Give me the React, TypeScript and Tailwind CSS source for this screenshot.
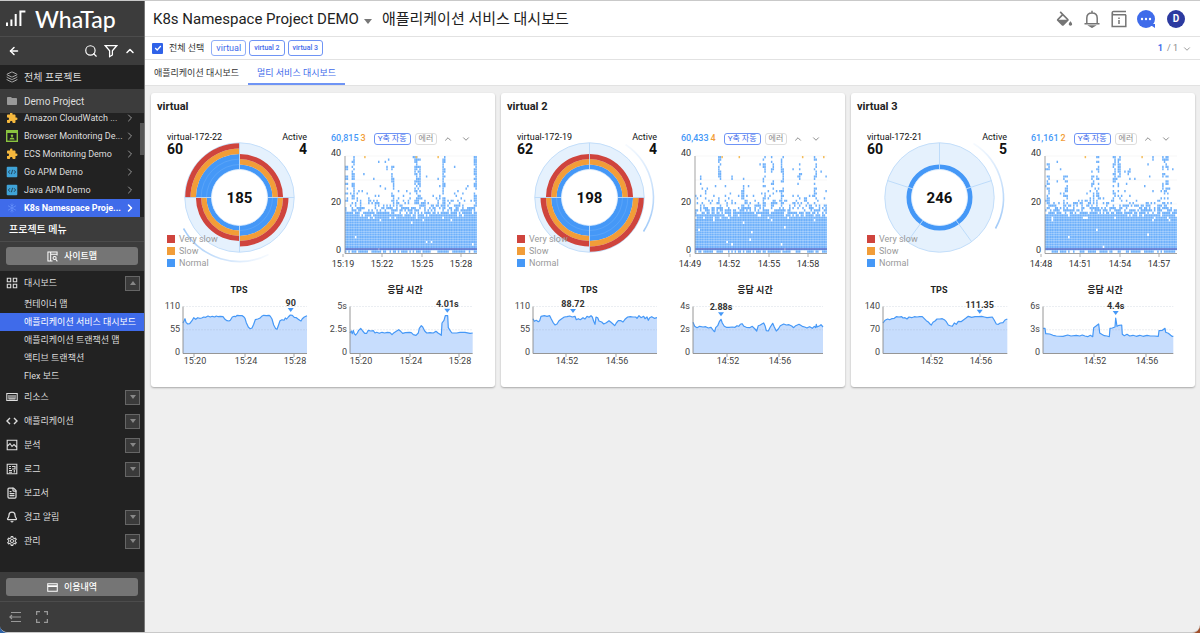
import type { ReactNode } from "react";
import {
  ArrowLeft,
  Bell,
  ChevronDown,
  ChevronRight,
  ChevronUp,
  FileText,
  Layers,
  Search,
} from "lucide-react";
import { MdExtension, MdFolder, MdOutlineSettings } from "react-icons/md";

type Point = [number, number];

const BLUE = "#4598f7";
const ORANGE = "#f29d38";
const RED = "#cf443d";

/* ------------------------------------------------------------------ */
/* Data                                                                */
/* ------------------------------------------------------------------ */

interface LineSeries {
  title: string;
  left: number;
  span: number;
  ticks: [string, string, string];
  times: { label: string; x: number }[];
  peak: { label: string; x: number; y: number };
  points: Point[];
}

interface Slice {
  from: number;
  to: number;
  /* outer radii of the normal, slow and very slow bands */
  radii: number[];
}

interface Service {
  name: string;
  host: string;
  transactions: number;
  active: number;
  total: number;
  slices: Slice[];
  sweep: { x1: number; y1: number; x2: number; y2: number };
  hits: string;
  errors: string;
  hitTimes: { label: string; x: number }[];
  spikes: { at: number; width: number; low: number; high: number; density: number }[];
  warnings: number[];
  seed: number;
  tps: LineSeries;
  response: LineSeries;
}

const SERVICES: Service[] = [
  {
    name: "virtual",
    host: "virtual-172-22",
    transactions: 60,
    active: 4,
    total: 185,
    slices: [
      { from: -90, to: 0, radii: [33, 38.4, 43.6] },
      { from: 0, to: 90, radii: [38.4, 43.6, 49] },
      { from: 90, to: 180, radii: [33, 38.4, 43.6] },
      { from: 180, to: 270, radii: [43.6, 49, 54.3] },
    ],
    sweep: { x1: -56, y1: 31, x2: 29, y2: 57 },
    hits: "60,815",
    errors: "3",
    hitTimes: [
      { label: "15:19", x: 12 },
      { label: "15:22", x: 51 },
      { label: "15:25", x: 91 },
      { label: "15:28", x: 130 },
    ],
    spikes: [
      { at: 0.01, width: 1, low: 20, high: 36, density: 0.45 },
      { at: 0.055, width: 1, low: 20, high: 40, density: 0.7 },
      { at: 0.36, width: 1, low: 18, high: 36, density: 0.5 },
      { at: 0.54, width: 2, low: 18, high: 40, density: 0.6 },
      { at: 0.745, width: 1, low: 18, high: 40, density: 0.65 },
      { at: 0.985, width: 1, low: 18, high: 40, density: 0.75 },
    ],
    warnings: [0.145, 0.535, 0.7],
    seed: 11,
    tps: {
      title: "TPS",
      left: 32,
      span: 372,
      ticks: ["110", "55", "0"],
      times: [
        { label: "15:20", x: 43 },
        { label: "15:24", x: 94 },
        { label: "15:28", x: 143 },
      ],
      peak: { label: "90", x: 323, y: 114 },
      points: [[0,90],[3,96],[6,103],[9,92],[14,87],[20,88],[27,97],[32,106],[38,101],[44,106],[50,104],[56,105],[62,108],[68,107],[75,111],[82,108],[88,110],[95,108],[100,111],[106,109],[112,110],[120,109],[126,101],[132,97],[138,96],[142,98],[148,108],[154,110],[158,109],[162,113],[170,112],[178,112],[183,108],[186,104],[190,91],[196,78],[201,73],[207,75],[212,86],[217,100],[224,102],[230,104],[236,110],[242,113],[250,112],[258,113],[262,110],[267,102],[272,84],[278,73],[282,71],[286,82],[291,97],[297,100],[303,98],[307,105],[311,102],[316,108],[322,114],[328,113],[334,107],[340,106],[346,101],[350,98],[354,96],[358,103],[364,108],[372,112]],
    },
    response: {
      title: "응답 시간",
      left: 27,
      span: 368,
      ticks: ["5s", "2.5s", "0"],
      times: [
        { label: "15:20", x: 37 },
        { label: "15:24", x: 87 },
        { label: "15:28", x: 136 },
      ],
      peak: { label: "4.01s", x: 292, y: 112 },
      points: [[0,60],[4,66],[7,58],[10,68],[13,58],[17,54],[22,60],[26,68],[32,74],[38,66],[44,59],[50,59],[55,68],[62,66],[70,67],[75,60],[80,62],[88,59],[96,62],[104,60],[112,62],[120,61],[126,55],[132,61],[140,66],[146,70],[152,65],[158,59],[166,61],[178,62],[184,61],[190,55],[198,53],[205,60],[208,74],[214,82],[218,78],[224,66],[230,60],[240,61],[250,60],[258,65],[264,60],[270,56],[274,53],[276,90],[282,98],[286,112],[293,112],[295,76],[302,65],[306,60],[320,60],[330,62],[345,62],[360,59],[368,60]],
    },
  },
  {
    name: "virtual 2",
    host: "virtual-172-19",
    transactions: 62,
    active: 4,
    total: 198,
    slices: [
      { from: -90, to: 0, radii: [33, 38.4, 43.6] },
      { from: 0, to: 90, radii: [43.6, 49, 54.3] },
      { from: 90, to: 180, radii: [38.4, 43.6, 49] },
      { from: 180, to: 270, radii: [33, 38.4, 43.6] },
    ],
    sweep: { x1: 54, y1: 34, x2: 36, y2: -53 },
    hits: "60,433",
    errors: "4",
    hitTimes: [
      { label: "14:49", x: 9 },
      { label: "14:52", x: 48 },
      { label: "14:55", x: 88 },
      { label: "14:58", x: 127 },
    ],
    spikes: [
      { at: 0.04, width: 1, low: 18, high: 33, density: 0.45 },
      { at: 0.18, width: 1, low: 30, high: 40, density: 0.8 },
      { at: 0.36, width: 1, low: 18, high: 31, density: 0.4 },
      { at: 0.52, width: 1, low: 18, high: 40, density: 0.5 },
      { at: 0.585, width: 1, low: 18, high: 40, density: 0.5 },
      { at: 0.66, width: 1, low: 18, high: 40, density: 0.5 },
      { at: 0.785, width: 1, low: 18, high: 35, density: 0.45 },
      { at: 0.91, width: 1, low: 18, high: 40, density: 0.6 },
    ],
    warnings: [0.2, 0.33, 0.81, 0.97],
    seed: 29,
    tps: {
      title: "TPS",
      left: 32,
      span: 372,
      ticks: ["110", "55", "0"],
      times: [
        { label: "14:52", x: 65 },
        { label: "14:56", x: 115 },
      ],
      peak: { label: "88.72", x: 120, y: 111 },
      points: [[0,103],[4,95],[10,98],[16,94],[20,97],[24,110],[34,112],[42,110],[50,112],[55,102],[60,92],[66,84],[72,87],[78,97],[86,103],[94,108],[102,109],[110,111],[118,108],[126,110],[130,100],[136,103],[142,100],[150,106],[156,102],[162,110],[168,107],[174,112],[178,108],[182,95],[186,86],[189,108],[194,106],[198,96],[206,93],[212,87],[220,91],[228,97],[234,92],[240,87],[245,82],[250,90],[256,97],[264,97],[270,93],[276,101],[284,108],[292,109],[300,108],[308,108],[312,104],[318,112],[324,106],[332,110],[336,103],[342,108],[346,98],[350,106],[356,109],[364,104],[372,106]],
    },
    response: {
      title: "응답 시간",
      left: 20,
      span: 390,
      ticks: ["4s", "2s", "0"],
      times: [
        { label: "14:52", x: 54 },
        { label: "14:56", x: 106 },
      ],
      peak: { label: "2.88s", x: 84, y: 101 },
      points: [[0,92],[5,80],[12,76],[20,80],[30,78],[38,79],[46,75],[54,77],[58,72],[62,66],[65,64],[68,76],[74,82],[79,94],[84,101],[88,90],[94,80],[100,77],[108,77],[118,78],[126,77],[132,82],[137,80],[142,86],[147,88],[153,80],[160,77],[170,76],[178,80],[186,72],[191,66],[196,82],[202,84],[208,88],[212,90],[216,82],[220,67],[226,66],[232,78],[239,89],[244,78],[250,66],[256,72],[262,82],[272,87],[280,84],[288,85],[296,81],[302,76],[308,82],[318,86],[328,80],[335,78],[342,75],[346,77],[350,79],[358,74],[364,80],[368,76],[370,86],[372,78],[380,82],[384,85],[390,78]],
    },
  },
  {
    name: "virtual 3",
    host: "virtual-172-21",
    transactions: 60,
    active: 5,
    total: 246,
    slices: [0, 1, 2, 3, 4].map((i) => ({ from: -90 + i * 72, to: -18 + i * 72, radii: [33] })),
    sweep: { x1: 56, y1: 31, x2: 34, y2: -54 },
    hits: "61,161",
    errors: "2",
    hitTimes: [
      { label: "14:48", x: 10 },
      { label: "14:51", x: 49 },
      { label: "14:54", x: 89 },
      { label: "14:57", x: 128 },
    ],
    spikes: [
      { at: 0.015, width: 1, low: 18, high: 37, density: 0.45 },
      { at: 0.15, width: 1, low: 18, high: 32, density: 0.4 },
      { at: 0.36, width: 1, low: 18, high: 34, density: 0.5 },
      { at: 0.39, width: 1, low: 18, high: 40, density: 0.55 },
      { at: 0.515, width: 1, low: 18, high: 40, density: 0.6 },
      { at: 0.555, width: 1, low: 18, high: 40, density: 0.5 },
      { at: 0.63, width: 1, low: 18, high: 34, density: 0.4 },
      { at: 0.91, width: 2, low: 18, high: 40, density: 0.5 },
    ],
    warnings: [0.3, 0.73],
    seed: 47,
    tps: {
      title: "TPS",
      left: 32,
      span: 373,
      ticks: ["140", "70", "0"],
      times: [
        { label: "14:52", x: 80 },
        { label: "14:56", x: 129 },
      ],
      peak: { label: "111.35", x: 290, y: 109 },
      points: [[0,90],[6,98],[14,102],[20,100],[26,103],[34,104],[40,109],[48,108],[56,109],[60,105],[66,106],[72,102],[78,108],[86,106],[94,109],[102,108],[110,109],[118,109],[124,103],[130,97],[136,93],[140,88],[145,84],[150,92],[156,96],[162,102],[170,102],[178,103],[184,100],[190,94],[196,84],[202,82],[208,80],[214,90],[220,86],[226,95],[234,94],[242,100],[248,104],[256,110],[266,107],[276,109],[286,109],[296,110],[304,108],[312,106],[320,107],[328,108],[334,98],[340,87],[346,86],[352,90],[360,91],[366,99],[373,102]],
    },
    response: {
      title: "응답 시간",
      left: 20,
      span: 391,
      ticks: ["6s", "3s", "0"],
      times: [
        { label: "14:52", x: 71 },
        { label: "14:56", x: 123 },
      ],
      peak: { label: "4.4s", x: 218, y: 105 },
      points: [[0,74],[6,74],[8,58],[20,57],[30,53],[40,51],[60,50],[74,54],[84,51],[100,53],[110,51],[118,54],[126,51],[134,49],[142,53],[149,49],[152,76],[158,80],[167,87],[170,60],[176,56],[184,52],[192,51],[199,49],[201,74],[208,75],[216,78],[218,105],[222,80],[228,83],[236,84],[238,56],[244,52],[252,56],[260,51],[270,53],[280,50],[290,53],[300,50],[312,53],[322,51],[334,51],[346,50],[348,67],[358,68],[366,74],[368,62],[376,59],[383,53],[387,50],[391,50]],
    },
  },
];

const PROJECTS = [
  { name: "Browser Monitoring De...", icon: "browser" },
  { name: "ECS Monitoring Demo", icon: "puzzle" },
  { name: "Go APM Demo", icon: "code" },
  { name: "Java APM Demo", icon: "code" },
];

const DASHBOARD_ITEMS = [
  "컨테이너 맵",
  "애플리케이션 서비스 대시보드",
  "애플리케이션 트랜잭션 맵",
  "액티브 트랜잭션",
  "Flex 보드",
];

/* ------------------------------------------------------------------ */
/* Charts                                                              */
/* ------------------------------------------------------------------ */

function polar(radius: number, degrees: number): Point {
  const a = (degrees * Math.PI) / 180;
  return [Math.cos(a) * radius, Math.sin(a) * radius];
}

function band(inner: number, outer: number, from: number, to: number) {
  const [ax, ay] = polar(outer, from);
  const [bx, by] = polar(outer, to);
  const [cx, cy] = polar(inner, to);
  const [dx, dy] = polar(inner, from);
  return `M${ax} ${ay}A${outer} ${outer} 0 0 1 ${bx} ${by}L${cx} ${cy}A${inner} ${inner} 0 0 0 ${dx} ${dy}Z`;
}

function Donut({ service }: { service: Service }) {
  const { sweep } = service;
  const id = `sweep-${service.seed}`;
  return (
    <svg viewBox="0 0 172 142" className="h-[142px] w-full" role="img" aria-label={`${service.name} active transactions`}>
      <defs>
        <linearGradient id={id} gradientUnits="userSpaceOnUse" x1={sweep.x1} y1={sweep.y1} x2={sweep.x2} y2={sweep.y2}>
          <stop offset="0" stopColor="#a3cbf8" />
          <stop offset="1" stopColor="#a3cbf8" stopOpacity="0.1" />
        </linearGradient>
      </defs>
      <g transform="translate(88.5 72.5)">
        <circle r="54.7" fill="#e5f1fd" stroke="#c3defa" />
        {service.slices.map((slice) =>
          slice.radii.map((radius, i) => (
            <path
              key={`${slice.from}-${i}`}
              d={band(i === 0 ? 28 : slice.radii[i - 1], radius, slice.from, slice.to)}
              fill={[BLUE, ORANGE, RED][i]}
            />
          )),
        )}
        {service.slices.map((slice) =>
          [33, 38.4].filter((r) => r < slice.radii[0]).map((r) => (
            <circle
              key={`${slice.from}-${r}`}
              r={r}
              fill="none"
              stroke="#66abf8"
              strokeWidth="0.6"
              pathLength="360"
              strokeDasharray="90 270"
              transform={`rotate(${slice.from})`}
            />
          )),
        )}
        {service.slices.map((slice) => {
          const [x, y] = polar(54.7, slice.from);
          const [ix, iy] = polar(28, slice.from);
          return <path key={slice.from} d={`M${ix} ${iy}L${x} ${y}`} stroke="#b9d9f9" strokeWidth="0.9" />;
        })}
        <circle r="28" fill="#fff" stroke="#d5e8fc" strokeWidth="0.8" />
        <path
          d={`M${sweep.x1} ${sweep.y1}A64 64 0 0 0 ${sweep.x2} ${sweep.y2}`}
          fill="none"
          stroke={`url(#${id})`}
          strokeWidth="1.6"
        />
        <text textAnchor="middle" y="5" className="text-[15px] font-bold" fill="#111">
          {service.total}
        </text>
      </g>
    </svg>
  );
}

function random(seed: number) {
  let a = seed;
  return () => {
    a = (a + 0x6d2b79f5) | 0;
    let t = Math.imul(a ^ (a >>> 15), 1 | a);
    t = (t + Math.imul(t ^ (t >>> 7), 61 | t)) ^ t;
    return ((t ^ (t >>> 14)) >>> 0) / 4294967296;
  };
}

const COLUMNS = 80;
const ROWS = 40;
/* chance of a hit for the rows from 13 upwards */
const FALLOFF = [0.97, 0.94, 0.86, 0.72, 0.56, 0.44, 0.34, 0.26, 0.2, 0.15, 0.1, 0.07, 0.05, 0.04, 0.03];

function hitCells(service: Service) {
  const next = random(service.seed);
  const cw = 132 / COLUMNS;
  const rh = 97 / ROWS;
  let d = "";
  for (let column = 0; column < COLUMNS; column++) {
    for (let row = 0; row < ROWS; row++) {
      let p = row === 0 ? 0.6 : row < 13 ? 0.993 : (FALLOFF[row - 13] ?? 0.015);
      for (const spike of service.spikes) {
        const distance = Math.abs(column - spike.at * COLUMNS);
        if (distance <= spike.width && row >= spike.low && row < spike.high) p = Math.max(p, spike.density);
      }
      if (next() < p) {
        d += `M${(column * cw).toFixed(2)} ${(97 - (row + 1) * rh).toFixed(2)}h1.5v2.2h-1.5z`;
      }
    }
  }
  return d;
}

function HitMap({ service }: { service: Service }) {
  return (
    <svg viewBox="0 0 172 126" className="h-[126px] w-full" role="img" aria-label={`${service.name} hit map`}>
      <g transform="translate(22 11)">
        {[0, 24, 48, 72].map((y) => (
          <path key={y} d={`M0 ${y}H132`} stroke="#f1f1f1" strokeWidth="0.6" />
        ))}
        <path d={hitCells(service)} fill="#6fb1fb" />
        {service.warnings.map((at) => (
          <rect key={at} x={at * 132} width="1.5" height="2.2" fill="#f4bd5c" />
        ))}
        <path d="M0 93H132" stroke="#5a62bd" strokeWidth="1.5" strokeOpacity="0.85" />
        <path d="M0 0V97.5H132" fill="none" stroke="#999" strokeWidth="0.9" />
      </g>
      <g fill="#333" className="text-[9px]">
        <text x="18" y="11" textAnchor="end">40</text>
        <text x="18" y="60" textAnchor="end">20</text>
        <text x="18" y="108" textAnchor="end">0</text>
        {service.hitTimes.map((time) => (
          <g key={time.label}>
            <path d={`M${time.x + 8} 109v3`} stroke="#999" strokeWidth="0.8" />
            <text x={time.x + 8} y="122" textAnchor="middle">{time.label}</text>
          </g>
        ))}
      </g>
    </svg>
  );
}

function LineChart({ series, titleClass }: { series: LineSeries; titleClass: string }) {
  const base = 56;
  const top = 9.5;
  const place = ([x, y]: Point): Point => [series.left + x / 3, base - y / 3];
  const line = series.points.map((p) => place(p).map((n) => n.toFixed(1)).join(" ")).join("L");
  const right = series.left + series.span / 3;
  const [px, py] = place([series.peak.x, series.peak.y]);
  return (
    <section className="text-center text-[9px]">
      <h3 className={titleClass}>{series.title}</h3>
      <svg viewBox="0 0 172 74" className="h-[74px] w-full" role="img" aria-label={series.title}>
        <path d={`M${series.left} ${base}L${line}L${right} ${base}Z`} fill="#c7ddfd" />
        {[top, (top + base) / 2].map((y) => (
          <path key={y} d={`M${series.left} ${y}H${right}`} stroke="#8b9bb5" strokeOpacity="0.25" strokeWidth="0.7" strokeDasharray="2 1" />
        ))}
        <path d={`M${line}`} fill="none" stroke={BLUE} strokeWidth="1.2" strokeLinejoin="round" />
        <path d={`M${series.left} ${top}V${base + 0.5}H${right}`} fill="none" stroke="#8a8a8a" strokeWidth="0.9" />
        <path d={`M${px - 3} ${py - 7}h6l-3 4z`} fill={BLUE} />
        <text x={px} y={py - 9} textAnchor="middle" className="font-bold" fill="#333">
          {series.peak.label}
        </text>
        <g fill="#444">
          {series.ticks.map((tick, i) => (
            <text key={tick} x={series.left - 3} y={[12, 35, 58][i]} textAnchor="end">{tick}</text>
          ))}
          {series.times.map((time) => (
            <g key={time.label}>
              <path d={`M${time.x} ${base + 1}v3`} stroke="#8a8a8a" strokeWidth="0.8" />
              <text x={time.x + 1} y="67" textAnchor="middle">{time.label}</text>
            </g>
          ))}
        </g>
      </svg>
    </section>
  );
}

/* ------------------------------------------------------------------ */
/* Service card                                                        */
/* ------------------------------------------------------------------ */

function ServiceCard({ service }: { service: Service }) {
  return (
    <article className="rounded-[3px] bg-white pt-2 pb-4 shadow-[0_1px_2px_rgba(0,0,0,0.3)]">
      <h2 className="px-1.5 text-[11px] leading-3 font-bold text-[#222]">{service.name}</h2>
      <div className="grid grid-cols-2 pt-3">
        <div className="relative h-[142px]">
          <Donut service={service} />
          <div className="absolute inset-x-4 top-1.5 flex justify-between text-[#111]">
            <div>
              <div className="text-[9px] leading-3">{service.host}</div>
              <div className="text-[14px] leading-3 font-bold">{service.transactions}</div>
            </div>
            <div className="text-right">
              <div className="text-[9px] leading-3">Active</div>
              <div className="text-[14px] leading-3 font-bold">{service.active}</div>
            </div>
          </div>
          <ul className="absolute -bottom-0.5 left-4 text-[9px] leading-3 text-[#999]">
            <li className="flex items-center gap-1"><span className="size-2 bg-[#cf443d]" />Very slow</li>
            <li className="flex items-center gap-1"><span className="size-2 bg-[#f29d38]" />Slow</li>
            <li className="flex items-center gap-1"><span className="size-2 bg-[#4598f7]" />Normal</li>
          </ul>
        </div>
        <div className="pt-1.5">
          <div className="flex h-3.5 items-center pt-px pl-2">
            <span className="text-[9px] font-medium text-[#4598f7]">{service.hits}</span>
            <span className="pl-0.5 text-[9px] font-medium text-[#f29d38]">{service.errors}</span>
            <button type="button" className="ml-2 h-3 rounded-[3px] border border-[#6f94f5] px-[3px] text-[8px] leading-[10px] text-[#3f6bea]">Y축 자동</button>
            <button type="button" className="ml-1 h-3 rounded-[3px] border border-[#ddd] px-[3px] text-[8px] leading-[10px] text-[#888]">에러</button>
            <button type="button" aria-label="이전" className="ml-1.5"><ChevronUp className="size-2.5 text-[#777]" /></button>
            <button type="button" aria-label="다음" className="ml-2"><ChevronDown className="size-2.5 text-[#777]" /></button>
          </div>
          <HitMap service={service} />
        </div>
      </div>
      <div className="grid grid-cols-2 pt-[13px]">
        <LineChart series={service.tps} titleClass="pl-1 leading-[13px] font-bold text-[#222]" />
        <LineChart series={service.response} titleClass="pr-2 leading-[13px] font-bold text-[#222]" />
      </div>
    </article>
  );
}

/* ------------------------------------------------------------------ */
/* Sidebar                                                             */
/* ------------------------------------------------------------------ */

function Glyph({ children, className = "size-3" }: { children: ReactNode; className?: string }) {
  return (
    <svg viewBox="0 0 12 12" className={className} fill="none" stroke="currentColor" strokeWidth="1.1" aria-hidden="true">
      {children}
    </svg>
  );
}

function ProjectIcon({ kind }: { kind: string }) {
  if (kind === "puzzle") return <MdExtension className="size-3 text-[#f5b83d]" aria-hidden="true" />;
  if (kind === "browser")
    return (
      <Glyph>
        <rect x="0.7" y="0.7" width="10.6" height="10.6" stroke="#8ac43f" strokeWidth="1.4" fill="#222" />
        <path d="M0.7 2H11.3" stroke="#8ac43f" strokeWidth="2" />
        <circle cx="6" cy="5.8" r="1.2" fill="#8ac43f" stroke="none" />
        <path d="M3.4 9.4Q3.6 7.4 6 7.4T8.6 9.4Z" fill="#8ac43f" stroke="none" />
      </Glyph>
    );
  if (kind === "k8s")
    return (
      <Glyph>
        <path d="M6 1.5V10.5M2 3.7L10 8.3M10 3.7L2 8.3M4.5 2.5L6 4L7.5 2.5M4.5 9.5L6 8L7.5 9.5" stroke="#6690fa" strokeWidth="0.8" />
      </Glyph>
    );
  return (
    <Glyph>
      <rect x="0.7" y="0.7" width="10.6" height="10.6" rx="1" fill="#3fa3d8" stroke="none" />
      <path d="M4 4.2L2.4 6L4 7.8M8 4.2L9.6 6L8 7.8M6.6 3.8L5.4 8.2" stroke="#1f3b4d" strokeWidth="0.9" />
    </Glyph>
  );
}

function MenuRow({ icon, label, toggle }: { icon: ReactNode; label: string; toggle?: "up" | "down" }) {
  return (
    <li className="flex h-6 items-center pr-1 pl-1.5">
      <a href="#menu" className="flex flex-1 items-center gap-1.5 text-[9px] text-[#ddd]">
        {icon}
        <span className="pt-0.5">{label}</span>
      </a>
      {toggle && (
        <button type="button" aria-label={`${label} 펼치기`} className="flex size-[15px] items-center justify-center border border-[#666] bg-[#3a3a3a] text-[#888]">
          <svg viewBox="0 0 6 4" className="h-1 w-1.5" fill="currentColor" aria-hidden="true">
            <path d={toggle === "up" ? "M0 4L3 0L6 4Z" : "M0 0L3 4L6 0Z"} />
          </svg>
        </button>
      )}
    </li>
  );
}

function Sidebar() {
  return (
    <aside className="flex w-[145px] shrink-0 flex-col border-r border-[#777] bg-[#222] text-[#ddd]">
      <div className="flex h-9 items-center gap-[9px] border-b border-[#4c4c4c] bg-[#3c3c3c] pl-1.5">
        <svg viewBox="0 0 20 18" className="h-[18px] w-5" fill="none" stroke="#fff" strokeWidth="2" aria-hidden="true">
          <path d="M1 16V12.6M5.4 16V9.5M9.7 16V4M14.4 16V1.6H19.4" />
        </svg>
        <span className="font-['Lato','Noto_Sans_CJK_KR',sans-serif] text-[23px] leading-6 font-medium text-white">WhaTap</span>
      </div>
      <div className="flex h-7 items-center bg-[#3c3c3c] pr-2 pl-2 text-white">
        <button type="button" aria-label="뒤로" className="mr-auto"><ArrowLeft className="size-3" strokeWidth={3} /></button>
        <button type="button" aria-label="검색"><Search className="size-3.5" strokeWidth={2} /></button>
        <button type="button" aria-label="필터" className="ml-1.5">
          <Glyph className="size-3.5"><path d="M1 1.3H11L7.2 5.8V9.4L4.8 10.9V5.8Z" /></Glyph>
        </button>
        <button type="button" aria-label="접기" className="ml-1.5"><ChevronUp className="size-3" strokeWidth={3} /></button>
      </div>
      <a href="#all" className="flex h-6 shrink-0 items-center gap-1.5 pl-1.5 text-[10px]">
        <Layers className="size-3 text-[#aaa]" strokeWidth={2} />
        전체 프로젝트
      </a>
      <a href="#demo" className="flex h-6 shrink-0 items-center gap-1.5 bg-[#3c3c3c] pl-1.5 text-[10px]">
        <MdFolder className="size-3 text-[#999]" aria-hidden="true" />
        Demo Project
      </a>
      <div className="flex justify-between">
        <ul className="w-[140px] text-[9px] whitespace-nowrap text-[#ddd]">
          <li className="flex h-3.5 flex-col justify-end overflow-hidden">
            <a href="#project" className="flex h-[18px] shrink-0 items-center gap-1.5 pl-1.5">
              <ProjectIcon kind="puzzle" />
              <span className="w-[94px] pt-0.5">Amazon CloudWatch ...</span>
              <ChevronRight className="size-3 text-[#999]" />
            </a>
          </li>
          {PROJECTS.map((project) => (
            <li key={project.name}>
              <a href="#project" className="flex h-[18px] items-center gap-1.5 pl-1.5">
                <ProjectIcon kind={project.icon} />
                <span className="w-[94px] pt-0.5">{project.name}</span>
                <ChevronRight className="size-3 text-[#999]" />
              </a>
            </li>
          ))}
          <li>
            <a href="#project" className="flex h-[18px] items-center gap-1.5 bg-[#3f6bea] pl-1.5 font-bold text-white">
              <ProjectIcon kind="k8s" />
              <span className="w-[94px] pt-0.5">K8s Namespace Proje...</span>
              <ChevronRight className="size-3" strokeWidth={3} />
            </a>
          </li>
        </ul>
        <div className="mt-2.5 h-8 w-1 bg-[#555]" />
      </div>
      <div className="flex h-[25px] shrink-0 items-center border-b border-[#4c4c4c] bg-[#3c3c3c] pl-[9px] text-[10px] font-medium text-white">프로젝트 메뉴</div>
      <div className="bg-[#3c3c3c] px-1.5 pt-[5px] pb-1.5">
        <button type="button" className="flex h-[18px] w-full items-center justify-center gap-1.5 rounded-[3px] bg-[#757575] pt-px text-[9px] font-medium text-white">
          <Glyph className="size-[11px]">
            <path d="M11 5V1H1V11H6M4 1V11M4 3.5H11" />
            <circle cx="8.3" cy="7.7" r="1.7" />
            <path d="M9.5 9L11.3 11.3" />
          </Glyph>
          사이트맵
        </button>
      </div>
      <ul>
        <MenuRow
          label="대시보드"
          toggle="up"
          icon={<Glyph><path d="M1.3 1.3h3.4v3.4h-3.4zM7.3 1.3h3.4v3.4h-3.4zM1.3 7.3h3.4v3.4h-3.4zM7.3 7.3h3.4v3.4h-3.4z" /></Glyph>}
        />
        {DASHBOARD_ITEMS.map((item, i) => (
          <li key={item}>
            <a
              href="#dashboard"
              className={
                i === 1
                  ? "flex h-[18px] items-center bg-[#3f6bea] pt-0.5 pl-6 text-[9px] whitespace-nowrap text-white"
                  : "flex h-[18px] items-center pt-0.5 pl-6 text-[9px] whitespace-nowrap"
              }
            >
              {item}
            </a>
          </li>
        ))}
        <MenuRow label="리소스" toggle="down" icon={<Glyph><path d="M0.8 2.5h10.4v7h-10.4zM3 4v4M5 4v4M7 4v4M9 4v4M2.5 8h7" /></Glyph>} />
        <MenuRow label="애플리케이션" toggle="down" icon={<Glyph><path d="M4 3L1 6L4 9M8 3L11 6L8 9" strokeWidth="1.4" /></Glyph>} />
        <MenuRow label="분석" toggle="down" icon={<Glyph><path d="M1.2 1.2h9.6v9.6h-9.6zM1.5 7L4 4.5L6 7.5L8 5.5L10.5 8" /></Glyph>} />
        <MenuRow label="로그" toggle="down" icon={<Glyph><path d="M1.2 1.2h9.6v9.6h-9.6zM3 3.5h2M6 3.5h3v2.5h-3M3 5.5h2M3 7.5h3M3 9.2h3M8.3 7v2.5" /></Glyph>} />
        <MenuRow label="보고서" icon={<FileText className="size-3" strokeWidth={2.5} />} />
        <MenuRow label="경고 알림" toggle="down" icon={<Bell className="size-3" strokeWidth={2.5} />} />
        <MenuRow label="관리" toggle="down" icon={<MdOutlineSettings className="size-3" />} />
      </ul>
      <div className="mt-auto border-b border-[#4c4c4c] bg-[#3c3c3c] px-1.5 pt-1.5 pb-[5px]">
        <button type="button" className="flex h-[18px] w-full items-center justify-center gap-1.5 rounded-[3px] bg-[#757575] pt-px text-[9px] font-medium text-white">
          <Glyph className="size-[11px]"><path d="M0.8 1.8h10.4v8.4h-10.4z" /><path d="M0.8 4.5h10.4" strokeWidth="2" /></Glyph>
          이용내역
        </button>
      </div>
      <div className="flex h-[30px] items-center gap-[15px] bg-[#3c3c3c] pl-[9px] text-[#999]">
        <button type="button" aria-label="메뉴 접기">
          <Glyph><path d="M2 1.5H12M0.5 6H12M2 10.5H12M3 4L0.8 6L3 8" /></Glyph>
        </button>
        <button type="button" aria-label="전체 화면">
          <Glyph><path d="M0.6 4V0.6H4M8 0.6H11.4V4M11.4 8V11.4H8M4 11.4H0.6V8" strokeWidth="1.3" /></Glyph>
        </button>
      </div>
    </aside>
  );
}

/* ------------------------------------------------------------------ */
/* Page                                                                */
/* ------------------------------------------------------------------ */

function TopBar() {
  return (
    <header className="flex h-9 items-center border-b border-[#e2e2e2] bg-white pr-[15px] pl-2 text-[#222]">
      <h1 className="flex items-center pt-0.5 text-[15px] whitespace-nowrap">
        K8s Namespace Project DEMO
        <svg viewBox="0 0 8 5" className="mx-[5px] mt-1 h-[5px] w-2" fill="#777" aria-hidden="true"><path d="M0 0H8L4 5Z" /></svg>
        <span className="pl-[5px]">애플리케이션 서비스 대시보드</span>
      </h1>
      <div className="ml-auto flex items-center gap-2.5 text-[#757575]">
        <button type="button" aria-label="테마">
          <svg viewBox="2 0 20 18" className="h-4 w-[17px]" fill="currentColor" aria-hidden="true">
            <path d="M16.56 8.94L7.62 0 6.21 1.41l2.38 2.38-5.15 5.15c-.59.59-.59 1.54 0 2.12l5.5 5.5c.29.29.68.44 1.06.44s.77-.15 1.06-.44l5.5-5.5c.59-.58.59-1.53 0-2.12zM5.21 10L10 5.21 14.79 10H5.21zM19 11.5s-2 2.17-2 3.5c0 1.1.9 2 2 2s2-.9 2-2c0-1.33-2-3.5-2-3.5z" />
          </svg>
        </button>
        <button type="button" aria-label="알림">
          <svg viewBox="0 0 18 18" className="size-[18px]" fill="none" stroke="currentColor" strokeWidth="1.5" aria-hidden="true">
            <path d="M1.5 13.8H16.5M3.8 13.5V8Q3.8 3 9 3T14.2 8V13.5M9 3V0.8" />
            <path d="M7 16H11L9 17.2Z" fill="currentColor" />
          </svg>
        </button>
        <button type="button" aria-label="안내">
          <svg viewBox="0 0 16 18" className="h-[18px] w-4" fill="none" stroke="currentColor" strokeWidth="1.5" aria-hidden="true">
            <path d="M15 4.8H3Q1.2 4.8 1.2 3T3 1.5H15M1.2 3V16.5H14.8V4.8" />
            <path d="M8 7.5V9M8 10V14" />
          </svg>
        </button>
        <button type="button" aria-label="채팅">
          <svg viewBox="0 0 18 18" className="size-[18px]" aria-hidden="true">
            <circle cx="9" cy="9" r="9" fill="#3f6bea" />
            <path d="M12 14H18V18Z" fill="#3f6bea" />
            <g fill="#fff"><circle cx="5" cy="9" r="1.2" /><circle cx="9" cy="9" r="1.2" /><circle cx="13" cy="9" r="1.2" /></g>
          </svg>
        </button>
        <button type="button" className="ml-0.5 flex size-[18px] items-center justify-center rounded-full bg-[#2c3aa0] text-[10px] font-bold text-white">D</button>
      </div>
    </header>
  );
}

function FilterBar() {
  return (
    <div className="flex h-[23px] items-center border-b border-[#e2e2e2] bg-white pr-2 pl-[7px]">
      <label className="flex items-center gap-1.5 text-[9px] text-[#333]">
        <span className="grid size-[11px] place-items-center">
          <input type="checkbox" defaultChecked className="col-start-1 row-start-1 size-[11px] appearance-none rounded-[1px] bg-[#2f62e8]" />
          <svg viewBox="0 0 10 10" className="pointer-events-none col-start-1 row-start-1 size-2" fill="none" stroke="#fff" strokeWidth="1.6" aria-hidden="true"><path d="M1.5 5L4 7.5L8.5 2.5" /></svg>
        </span>
        <span className="pt-px">전체 선택</span>
      </label>
      <div className="flex gap-[3px] pl-[7px]">
        <button type="button" className="h-4 rounded-[3px] border border-[#8fadf8] px-1 text-[9px] leading-[15px] text-[#3f6bea]">virtual</button>
        <button type="button" className="h-4 rounded-[3px] border border-[#6f94f5] px-1 text-[7px] leading-[15px] font-medium text-[#3f6bea]">virtual 2</button>
        <button type="button" className="h-4 rounded-[3px] border border-[#6f94f5] px-1 text-[7px] leading-[15px] font-medium text-[#3f6bea]">virtual 3</button>
      </div>
      <div className="ml-auto flex items-center pt-px text-[9px] text-[#888]">
        <b className="pr-1 text-[#3f6bea]">1</b>/ 1
        <button type="button" aria-label="페이지 선택" className="ml-1"><ChevronDown className="size-2.5" /></button>
      </div>
    </div>
  );
}

export default function App() {
  return (
    <div className="min-h-screen bg-linear-to-r from-[#2f64a8] to-[#a1502c] font-['Roboto','Noto_Sans_CJK_KR',sans-serif]">
      <div className="flex min-h-screen overflow-hidden rounded-b-lg border-y border-[#c9c9c9] bg-[#efefef]">
        <Sidebar />
        <main className="flex-1">
          <TopBar />
          <FilterBar />
          <nav className="flex h-[26px] border-b border-[#e2e2e2] bg-white text-[9px]">
            <a href="#app" className="flex items-center px-[9px] pt-0.5 text-[#333]">애플리케이션 대시보드</a>
            <a href="#multi" className="flex items-center border-b-2 border-[#6f94f5] px-[9px] pt-1 text-[#3f6bea]">멀티 서비스 대시보드</a>
          </nav>
          <div className="grid grid-cols-3 gap-1.5 pt-[7px] pr-[5px] pl-1.5">
            {SERVICES.map((service) => (
              <ServiceCard key={service.name} service={service} />
            ))}
          </div>
        </main>
      </div>
    </div>
  );
}
